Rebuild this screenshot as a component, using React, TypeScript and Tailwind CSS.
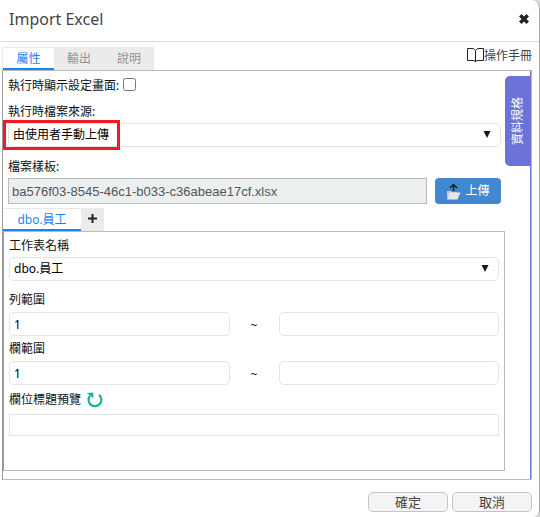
import { useState } from "react";
import type { ReactNode } from "react";

const TABS = ["屬性", "輸出", "說明"];

const inputClass = "h-6 w-full min-w-0 rounded-[5px] border border-[#e4e4e4] bg-white px-1 font-['Noto_Sans','Noto_Sans_CJK_TC',sans-serif] text-xs text-black";

function SelectBox({ id, options }: { id: string; options: string[] }) {
  return (
    <div className="relative">
      <select id={id} className={`${inputClass} block appearance-none`}>
        {options.map((option) => (
          <option key={option}>{option}</option>
        ))}
      </select>
      <svg viewBox="0 0 8 7" className="pointer-events-none absolute top-2 right-2.5 h-[7px] w-2 fill-[#1a1a1a]">
        <path d="M.5 0h7L4 7z" />
      </svg>
    </div>
  );
}

function Label({ htmlFor, children }: { htmlFor: string; children: ReactNode }) {
  return (
    <label htmlFor={htmlFor} className="block h-[22px] leading-[22px]">
      {children}
    </label>
  );
}

function RangeRow({ id, label, from }: { id: string; label: string; from: string }) {
  const [start, setStart] = useState(from);
  const [end, setEnd] = useState("");

  return (
    <div>
      <Label htmlFor={id}>{label}</Label>
      <div className="mt-px grid grid-cols-[1fr_49px_1fr] items-center">
        <input id={id} value={start} onChange={(e) => setStart(e.target.value)} className={inputClass} />
        <span className="pt-1 text-center">~</span>
        <input aria-label={label} value={end} onChange={(e) => setEnd(e.target.value)} className={inputClass} />
      </div>
    </div>
  );
}

export default function App() {
  const [tab, setTab] = useState("屬性");
  const [showSettings, setShowSettings] = useState(false);

  return (
    <div className="bg-[#dcdcdc] font-['Noto_Sans','Noto_Sans_CJK_TC',sans-serif] text-xs text-[#111]">
      <div className="min-h-screen rounded-tr-lg rounded-br-md border-r border-[#a8a8a8] bg-white">
        {/* Title bar */}
        <header className="flex h-[42px] items-center justify-between border-b border-[#dcdcdc] pr-2.5 pb-1 pl-[9px]">
          <h1 className="text-base text-[#444]">Import Excel</h1>
          <button aria-label="Close">
            <svg viewBox="0 0 10 10" className="h-[10px] w-[10px] stroke-[#222]" strokeWidth="3.5">
              <path d="M1.300 1.300l7.400 7.400M8.700 1.300L1.300 8.700" />
            </svg>
          </button>
        </header>

        <div className="pt-[5px] pr-[7px] pl-0.5">
          {/* Main tabs */}
          <div className="flex justify-between">
            <div className="flex h-[23px] border-t border-l border-[#e9e9e9]">
              {TABS.map((name) => (
                <button
                  key={name}
                  onClick={() => setTab(name)}
                  className={
                    tab === name
                      ? "w-[51px] border-b-2 border-[#1e82f0] bg-white pt-0.5 text-[#1e82f0]"
                      : "w-[50px] bg-[#ebebeb] text-[#949494]"
                  }
                >
                  {name}
                </button>
              ))}
            </div>
            <a href="#manual" className="flex items-center pb-1.5 text-[#444]">
              <svg viewBox="0 0 17 15" className="h-[15px] w-[17px] fill-none stroke-[#222]">
                <path d="M8.500 2.500C7.500 1 6.500.5 5 .5H.5v12H6c1.500 0 2 .5 2.500 1.500.5-1 1-1.500 2.500-1.500h5.500V.5H12c-1.500 0-2.500.5-3.500 2zM8.500 2.500V14" />
              </svg>
              操作手冊
            </a>
          </div>

          {/* Settings panel */}
          <main className="flex border border-t-[#bababa] border-r-[#bababa] border-b-[#bababa] border-l-[#999]">
            <div className="min-w-0 flex-1 pb-2">
              <div className="pr-1 pl-[5px]">
                <div className="flex items-start gap-1 pt-[7px]">
                  <label htmlFor="show">執行時顯示設定畫面:</label>
                  <input
                    id="show"
                    type="checkbox"
                    checked={showSettings}
                    onChange={(e) => setShowSettings(e.target.checked)}
                    className="h-[13px] w-[13px]"
                  />
                </div>
                <div className="relative pt-[7px]">
                  <Label htmlFor="source">執行時檔案來源:</Label>
                  <SelectBox id="source" options={["由使用者手動上傳"]} />
                  <div className="pointer-events-none absolute -bottom-[3px] -left-[5px] h-[30px] w-[117px] border-[3px] border-[#ed1c24]" />
                </div>
                <div className="pt-[9px]">
                  <Label htmlFor="template">檔案樣板:</Label>
                  <div className="flex items-center gap-2">
                    <input
                      id="template"
                      readOnly
                      value="ba576f03-8545-46c1-b033-c36abeae17cf.xlsx"
                      className="h-[26px] min-w-0 flex-1 border border-[#bbb] bg-[#ebeff0] px-[3px] font-['Liberation_Sans',sans-serif] text-[13px] text-[#555]"
                    />
                    <button className="flex h-[26px] w-[66px] items-center justify-center gap-1 rounded-sm bg-[#4288d0] text-white">
                      <svg viewBox="0 0 15 17" className="h-[17px] w-[15px]">
                        <path d="M1 8h4l1 1h5v2H3L1 16z" fill="#c9c9c9" />
                        <path d="M3.500 9.500H14.500L11.500 16.500H1z" fill="#e6e6e6" />
                        <path d="M7.500 8V1.500M4 5l3.500-3.500L11 5" fill="none" stroke="#1c1c1c" strokeWidth="1.500" />
                      </svg>
                      上傳
                    </button>
                  </div>
                </div>
              </div>

              {/* Sheet tabs */}
              <div className="mt-1 flex h-[23px]">
                <button className="w-[78px] border-t border-b-2 border-t-[#e9e9e9] border-b-[#1e82f0] pt-0.5 text-[#1e82f0]">dbo.員工</button>
                <button aria-label="Add sheet" className="flex w-[23px] items-center justify-center bg-[#ebebeb] pb-0.5">
                  <svg viewBox="0 0 9 9" className="h-[9px] w-[9px] stroke-[#222]" strokeWidth="2">
                    <path d="M4.500 0v9M0 4.500h9" />
                  </svg>
                </button>
              </div>
              <section className="border border-[#bababa] border-l-[#999] px-[5px] pt-[3px] pb-[34px]">
                <Label htmlFor="sheet">工作表名稱</Label>
                <SelectBox id="sheet" options={["dbo.員工"]} />
                <div className="mt-2 flex flex-col gap-0.5">
                  <RangeRow id="rows" label="列範圍" from="1" />
                  <RangeRow id="columns" label="欄範圍" from="1" />
                </div>
                <div className="mt-1 flex items-center gap-1.5">
                  <Label htmlFor="preview">欄位標題預覽</Label>
                  <button aria-label="Refresh">
                    <svg viewBox="0 0 16 16" className="h-4 w-4">
                      <path d="M12 2.800A6.400 6.400 0 1 1 3 3.800" fill="none" stroke="#1ab394" strokeWidth="2.200" />
                      <path d="M0 1L6.300.5V6.300z" fill="#1ab394" />
                    </svg>
                  </button>
                </div>
                <input id="preview" readOnly className="mt-[3px] h-[22px] w-full border border-[#e4e4e4] px-1" />
              </section>
            </div>

            {/* Side drawer handle */}
            <div className="w-[26px] border-r border-[#6b73d6] pt-[5px]">
              <button className="flex h-[90px] w-[26px] items-center justify-center rounded-l-[5px] bg-[#6b73d6] text-white">
                <span className="rotate-180 [text-orientation:sideways] [writing-mode:vertical-rl]">資料規格</span>
              </button>
            </div>
          </main>

          {/* Footer */}
          <footer className="flex justify-end gap-1 pt-3 pb-1">
            {["確定", "取消"].map((name) => (
              <button key={name} className="h-5 w-20 rounded-[5px] border border-[#c4c4c4] bg-[#f4f4f4] text-[13px] leading-none text-[#444]">
                {name}
              </button>
            ))}
          </footer>
        </div>
      </div>
    </div>
  );
}
